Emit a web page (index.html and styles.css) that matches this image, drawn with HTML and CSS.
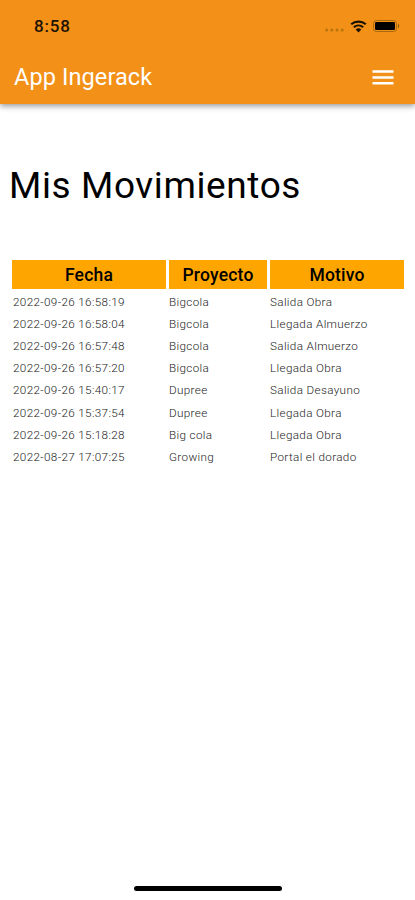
FILE: index.html
```html
<!DOCTYPE html>
<html lang="es">
<head>
    <meta charset="UTF-8">
    <meta name="viewport" content="width=device-width, initial-scale=1.0">
    <title>App Ingerack</title>
    <link rel="stylesheet" href="styles.css">
</head>
<body>
    <header class="header">
        <div class="status-bar">
            <span class="time">8:58</span>
            <div class="status-icons">
                <svg class="signal" width="19" height="4" viewBox="0 0 19 4">
                    <circle cx="1.6" cy="2" r="1.5"/>
                    <circle cx="6.8" cy="2" r="1.5"/>
                    <circle cx="12" cy="2" r="1.5"/>
                    <circle cx="17.2" cy="2" r="1.5"/>
                </svg>
                <svg class="wifi" width="17" height="13" viewBox="0 0 17 13">
                    <path d="M1.2 4.3C5.3.6 11.7.6 15.8 4.3" fill="none" stroke="#1c1204" stroke-width="2.2"/>
                    <path d="M3.8 7.2C6.5 4.8 10.5 4.8 13.2 7.2" fill="none" stroke="#1c1204" stroke-width="2"/>
                    <path d="M5.7 9.4C7.3 8 9.7 8 11.3 9.4L8.5 12.4Z" fill="#1c1204"/>
                </svg>
                <svg class="battery" width="27" height="12" viewBox="0 0 27 12">
                    <rect x=".5" y=".5" width="23" height="11" rx="3" fill="none" stroke="#a9690f"/>
                    <rect x="2" y="2" width="20" height="8" rx="1.3" fill="#000"/>
                    <path d="M25 3.8C26.7 4.6 26.7 7.4 25 8.2Z" fill="#8a560e"/>
                </svg>
            </div>
        </div>
        <nav class="navbar">
            <h1>App Ingerack</h1>
            <button class="menu-btn" aria-label="Menú">
                <svg width="22" height="15" viewBox="0 0 22 15">
                    <path d="M.5 1.5h21M.5 7.5h21M.5 13.3h21" stroke="#fff" stroke-width="2.4"/>
                </svg>
            </button>
        </nav>
    </header>

    <main class="container">
        <h2>Mis Movimientos</h2>
        <table>
            <thead>
                <tr>
                    <th class="fecha">Fecha</th>
                    <th class="proyecto">Proyecto</th>
                    <th class="motivo">Motivo</th>
                </tr>
            </thead>
            <tbody>
                <tr><td>2022-09-26 16:58:19</td><td>Bigcola</td><td>Salida Obra</td></tr>
                <tr><td>2022-09-26 16:58:04</td><td>Bigcola</td><td>Llegada Almuerzo</td></tr>
                <tr><td>2022-09-26 16:57:48</td><td>Bigcola</td><td>Salida Almuerzo</td></tr>
                <tr><td>2022-09-26 16:57:20</td><td>Bigcola</td><td>Llegada Obra</td></tr>
                <tr><td>2022-09-26 15:40:17</td><td>Dupree</td><td>Salida Desayuno</td></tr>
                <tr><td>2022-09-26 15:37:54</td><td>Dupree</td><td>Llegada Obra</td></tr>
                <tr><td>2022-09-26 15:18:28</td><td>Big cola</td><td>Llegada Obra</td></tr>
                <tr><td>2022-08-27 17:07:25</td><td>Growing</td><td>Portal el dorado</td></tr>
            </tbody>
        </table>
    </main>

    <div class="home-indicator"></div>
</body>
</html>
```

FILE: styles.css
```css
* {
    box-sizing: border-box;
}
body {
    font-family: Roboto, sans-serif;
    margin: 0;
    height: 900px;
    background-color: #fff;
    color: #000;
    display: flex;
    flex-direction: column;
    overflow: hidden;
}
.header {
    height: 104px;
    background-color: #f29018;
    box-shadow: 0 2px 6px rgba(0, 0, 0, 0.42);
}
.status-bar {
    height: 52px;
    padding: 0 15px 0 34px;
    display: flex;
    justify-content: space-between;
    align-items: center;
}
.time {
    font-size: 17px;
    font-weight: 500;
    letter-spacing: 0.8px;
    color: #1c1204;
}
.status-icons {
    display: flex;
    align-items: center;
}
.signal {
    fill: #b8730f;
    margin: 8px 6px 0 0;
}
.wifi {
    margin-right: 6px;
}
.navbar {
    height: 50px;
    padding: 0 21px 0 14px;
    display: flex;
    justify-content: space-between;
    align-items: center;
}
.navbar h1 {
    margin: 0 0 1px;
    font-size: 23.5px;
    font-weight: 400;
    letter-spacing: 0.1px;
    color: white;
}
.menu-btn {
    display: flex;
    padding: 0;
    border: none;
    background: none;
}
.container {
    flex: 1;
    padding: 0 9px;
}
h2 {
    margin: 59px 0 0;
    font-size: 37px;
    line-height: 46px;
    font-weight: 400;
    letter-spacing: 0.6px;
}
table {
    width: 398px;
    margin-top: 51px;
    table-layout: fixed;
    border-collapse: separate;
    border-spacing: 3px 0;
}
th {
    height: 29px;
    padding: 0;
    background-color: #ffa500;
    font-size: 17.5px;
    font-weight: 500;
    letter-spacing: 0.2px;
}
.fecha {
    width: 154px;
}
.proyecto {
    width: 98px;
}
td {
    height: 22.2px;
    padding: 3px 0 0;
    font-size: 11.7px;
    line-height: 18px;
    letter-spacing: 0.35px;
    font-weight: 300;
    color: #222;
    white-space: nowrap;
}
td:first-child {
    padding-left: 1px;
}
.home-indicator {
    width: 148px;
    height: 5px;
    margin: 0 0 9px 134px;
    border-radius: 3px;
    background-color: #000;
}
```
